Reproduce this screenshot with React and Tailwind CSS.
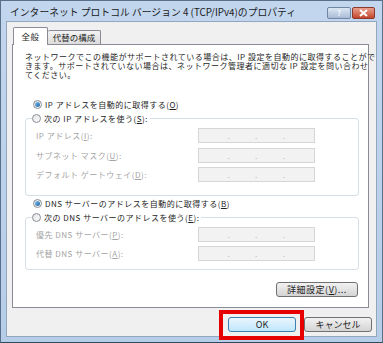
import React from 'react';

const jp = "font-['Noto_Sans_CJK_JP','Noto_Sans',sans-serif]";

const Radio = ({ checked }) => (
    <span className="w-[9px] h-[9px] rounded-full border border-[#8a8f96] bg-gradient-to-br from-[#e4e4e4] to-[#fbfbfb] flex items-center justify-center shrink-0">
        {checked && <span className="w-[5px] h-[5px] rounded-full bg-gradient-to-br from-[#7fc6f2] to-[#1d5fa0]" />}
    </span>
);

const U = ({ children }) => <span className="underline underline-offset-1">{children}</span>;

const IpBox = () => (
    <div className="w-[117px] h-[15px] border border-[#d6d6d6] bg-[#f2f2f2] flex justify-around items-end pb-[2px] px-[16px] text-[8px] leading-none text-[#b4b4b4]">
        <span>.</span>
        <span>.</span>
        <span>.</span>
    </div>
);

const Field = ({ label }) => (
    <div className="flex items-center h-[15px]">
        <span className="w-[172px] pl-[10px] text-[#a3a3a3] whitespace-nowrap">{label}</span>
        <IpBox />
    </div>
);

const Group = ({ legend, className = '', children }) => (
    <fieldset className={`border border-[#d5dfe5] rounded-[3px] ${className}`}>
        <legend className="ml-[6px] pr-[2px] flex items-center gap-[3px] h-[14px] text-[#1e1e1e] whitespace-nowrap">
            <Radio />
            {legend}
        </legend>
        {children}
    </fieldset>
);

const Button = ({ children, primary, className = '' }) => (
    <button
        className={
            primary
                ? `h-[15px] rounded-[3px] border border-[#3c7fb1] bg-gradient-to-b from-[#eaf6fd] to-[#bee6fd] text-[9px] leading-none text-[#1e1e1e] ${className}`
                : `h-[15px] rounded-[3px] border border-[#707070] bg-gradient-to-b from-[#f2f2f2] to-[#d4d4d4] text-[9px] leading-none text-[#1e1e1e] ${className}`
        }
    >
        {children}
    </button>
);

export default function App() {
    return (
        <div className={`relative w-[383px] h-[343px] bg-gradient-to-b from-[#c2d6ee] to-[#b6cde8] border border-[#59708a] border-b-[#2e4a5e] flex flex-col ${jp}`}>
            {/* title bar */}
            <div className="h-[20px] flex items-center justify-between pt-[4px] pl-[9px] pr-[6px]">
                <span className="text-[9.8px] leading-none text-[#1b1b1b] whitespace-nowrap">
                    インターネット プロトコル バージョン 4 (TCP/IPv4)のプロパティ
                </span>
                <div className="flex gap-[1px] mr-[1px]">
                    <div className="w-[24px] h-[12px] rounded-[2px] border border-[#6f86a4] bg-gradient-to-b from-[#dbe6f3] to-[#a9bcd6] flex items-center justify-center text-[8px] leading-none font-bold text-[#eef4fb]">
                        ?
                    </div>
                    <div className="w-[23px] h-[12px] rounded-[2px] border border-[#8b3a2d] bg-gradient-to-b from-[#e7a08d] to-[#c3432a] flex items-center justify-center">
                        <svg width="9" height="8" viewBox="0 0 9 8">
                            <path d="M1 1 L8 7 M8 1 L1 7" stroke="#fff" strokeWidth="2" />
                        </svg>
                    </div>
                </div>
            </div>

            {/* client area */}
            <div className="flex-1 mx-[5px] mb-[5px] bg-[#f0f0f0] border border-[#92a6bf] flex flex-col pt-[5px] pl-[5px] pr-[7px]">
                {/* tabs */}
                <div className="flex items-end h-[17px] pl-[1px] relative z-10 text-[8.5px] leading-none text-[#1e1e1e]">
                    <div className="h-[18px] w-[35px] bg-white border border-[#898c95] border-b-0 rounded-t-[2px] flex items-center justify-center -mb-[1px] tracking-[0.5px]">
                        全般
                    </div>
                    <div className="h-[14px] w-[53px] bg-gradient-to-b from-[#f3f3f3] to-[#dcdcdc] border border-[#898c95] border-l-0 border-b-0 rounded-t-[2px] flex items-center justify-center">
                        代替の構成
                    </div>
                </div>

                {/* panel */}
                <div className="h-[264px] bg-white border border-[#898c95] flex flex-col pl-[12px] pr-[9px] text-[8px] leading-[9px] tracking-[0.5px] text-[#1e1e1e]">
                    <p className="pt-[7px] whitespace-nowrap">
                        ネットワークでこの機能がサポートされている場合は、IP 設定を自動的に取得することがで
                        <br />
                        きます。サポートされていない場合は、ネットワーク管理者に適切な IP 設定を問い合わせ
                        <br />
                        てください。
                    </p>

                    <div className="mt-[18px] h-[14px] flex items-center gap-[3px] pl-[8px] whitespace-nowrap">
                        <Radio checked />
                        <span>IP アドレスを自動的に取得する(<U>O</U>)</span>
                    </div>

                    <Group className="pb-[13px]" legend={<span>次の IP アドレスを使う(<U>S</U>):</span>}>
                        <div className="flex flex-col gap-[4.5px] mt-[3px]">
                            <Field label={<>IP アドレス(<U>I</U>):</>} />
                            <Field label={<>サブネット マスク(<U>U</U>):</>} />
                            <Field label={<>デフォルト ゲートウェイ(<U>D</U>):</>} />
                        </div>
                    </Group>

                    <div className="h-[14px] flex items-center gap-[3px] pl-[8px] whitespace-nowrap">
                        <Radio checked />
                        <span>DNS サーバーのアドレスを自動的に取得する(<U>B</U>)</span>
                    </div>

                    <Group className="pb-[8px]" legend={<span>次の DNS サーバーのアドレスを使う(<U>E</U>):</span>}>
                        <div className="flex flex-col gap-[4px] mt-[3px]">
                            <Field label={<>優先 DNS サーバー(<U>P</U>):</>} />
                            <Field label={<>代替 DNS サーバー(<U>A</U>):</>} />
                        </div>
                    </Group>

                    <div className="flex justify-end mt-[12px] pr-[1px]">
                        <Button className="w-[82px]">
                            詳細設定(<U>V</U>)...
                        </Button>
                    </div>
                </div>

                {/* dialog buttons */}
                <div className="flex justify-end gap-[8px] mt-[9px] mr-[-3px]">
                    <Button primary className="w-[68px]">OK</Button>
                    <Button className="w-[68px]">キャンセル</Button>
                </div>
            </div>

            {/* red highlight annotation */}
            <div className="absolute left-[218px] top-[309px] w-[85px] h-[30px] border-[4px] border-[#e60000]" />
        </div>
    );
}
